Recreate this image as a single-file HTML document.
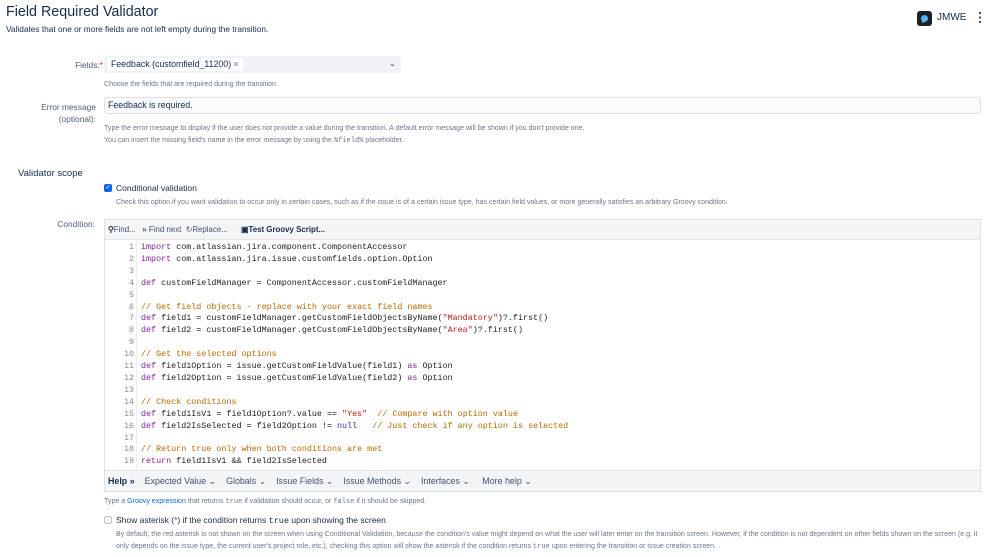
<!DOCTYPE html>
<html><head><meta charset="utf-8"><style>
*{margin:0;padding:0;box-sizing:border-box}
body{width:999px;height:557px;overflow:hidden;background:#fff;font-family:"Liberation Sans",sans-serif;color:#172b4d;position:relative}
.a{position:absolute;white-space:nowrap}
.lbl{font-size:8.4px;color:#505f79;text-align:right}
.hint{font-size:7.05px;color:#6b778c}
.mono{font-family:"Liberation Mono",monospace}
#code{position:absolute;left:104px;top:240px;width:877px;height:230px;font-family:"Liberation Mono",monospace;font-size:8.4px;line-height:11.9px;}
#code .g{position:absolute;left:0;top:2px;width:30px;text-align:right;color:#8a8a8a}
#code .c{position:absolute;left:37px;top:2px;color:#1e1e1e;white-space:pre}
.k{color:#8a1e9c}.s{color:#c41a16}.cm{color:#b86a00}.n{color:#2536c8}
.hb span{margin-right:10px}
</style></head><body>
<div class="a" style="left:6px;top:4px;font-size:14.3px;color:#172b4d">Field Required Validator</div>
<div class="a" style="left:6px;top:24px;font-size:8.3px;color:#172b4d">Validates that one or more fields are not left empty during the transition.</div>
<div class="a" style="left:917px;top:11px;width:15px;height:15px;background:#1d2125;border-radius:3px"><div style="position:absolute;left:4px;top:4px;width:7px;height:7px;background:#4fb3f0;border-radius:50% 50% 50% 10%;transform:rotate(-20deg)"></div></div>
<div class="a" style="left:937px;top:12px;font-size:10px;color:#172b4d">JMWE</div>
<div class="a" style="left:979px;top:12px;width:2px;height:11px;background:repeating-linear-gradient(#42526e 0 2px,transparent 2px 4.5px)"></div>

<div class="a lbl" style="right:896px;top:60px">Fields:<span style="color:#de350b">*</span></div>
<div class="a" style="left:104px;top:56px;width:297px;height:17px;background:#f1f2f5;border-radius:3px"></div>
<div class="a" style="left:107px;top:58px;height:13px;padding:0 4px;background:#fff;border-radius:2px;font-size:8.8px;line-height:13px;color:#172b4d">Feedback (customfield_11200) <span style="color:#6b778c">×</span></div>
<div class="a" style="left:389px;top:59px;font-size:8px;color:#42526e">⌄</div>
<div class="a hint" style="left:104px;top:81px">Choose the fields that are required during the transition.</div>

<div class="a lbl" style="right:903px;top:101px;line-height:12px">Error message<br>(optional):</div>
<div class="a" style="left:104px;top:97px;width:877px;height:17px;border:1px solid #dfe1e6;border-radius:3px;background:#fafbfc;font-size:8.8px;padding:2px 3px;color:#172b4d">Feedback is required.</div>
<div class="a hint" style="left:104px;top:125px">Type the error message to display if the user does not provide a value during the transition. A default error message will be shown if you don't provide one.</div>
<div class="a hint" style="left:104px;top:137px">You can insert the missing field's name in the error message by using the <span class="mono">%field%</span> placeholder.</div>

<div class="a" style="left:18px;top:168px;font-size:9.5px;color:#172b4d">Validator scope</div>
<div class="a" style="left:104px;top:184px;width:8px;height:8px;background:#0c66e4;border-radius:2px;color:#fff;font-size:6px;line-height:8px;text-align:center">✓</div>
<div class="a" style="left:116px;top:183px;font-size:8.5px;color:#172b4d">Conditional validation</div>
<div class="a hint" style="left:116px;top:199px">Check this option if you want validation to occur only in certain cases, such as if the issue is of a certain issue type, has certain field values, or more generally satisfies an arbitrary Groovy condition.</div>

<div class="a lbl" style="right:904px;top:219px">Condition:</div>
<div class="a" style="left:104px;top:219px;width:877px;height:273px;border:1px solid #dfe1e6"></div>
<div class="a" style="left:105px;top:220px;width:875px;height:20px;background:#f4f5f7;border-bottom:1px solid #e5e5e5"></div>
<div class="a" style="left:108px;top:225px;font-size:7.9px;color:#42526e"><b style="color:#172b4d">⚲</b>Find... &nbsp;&nbsp;<b>»</b> Find next &nbsp;↻Replace... &nbsp;&nbsp;&nbsp;&nbsp;&nbsp;<span style="color:#172b4d;font-weight:bold">▣Test Groovy Script...</span></div>
<div class="a" style="left:136px;top:240px;width:1px;height:230px;background:#eee"></div>
<div id="code">
<div class="g">1<br>2<br>3<br>4<br>5<br>6<br>7<br>8<br>9<br>10<br>11<br>12<br>13<br>14<br>15<br>16<br>17<br>18<br>19</div>
<div class="c"><span class="k">import</span> com.atlassian.jira.component.ComponentAccessor
<span class="k">import</span> com.atlassian.jira.issue.customfields.option.Option

<span class="k">def</span> customFieldManager = ComponentAccessor.customFieldManager

<span class="cm">// Get field objects - replace with your exact field names</span>
<span class="k">def</span> field1 = customFieldManager.getCustomFieldObjectsByName(<span class="s">"Mandatory"</span>)?.first()
<span class="k">def</span> field2 = customFieldManager.getCustomFieldObjectsByName(<span class="s">"Area"</span>)?.first()

<span class="cm">// Get the selected options</span>
<span class="k">def</span> field1Option = issue.getCustomFieldValue(field1) <span class="k">as</span> Option
<span class="k">def</span> field2Option = issue.getCustomFieldValue(field2) <span class="k">as</span> Option

<span class="cm">// Check conditions</span>
<span class="k">def</span> field1IsV1 = field1Option?.value == <span class="s">"Yes"</span>  <span class="cm">// Compare with option value</span>
<span class="k">def</span> field2IsSelected = field2Option != <span class="n">null</span>   <span class="cm">// Just check if any option is selected</span>

<span class="cm">// Return true only when both conditions are met</span>
<span class="k">return</span> field1IsV1 &amp;&amp; field2IsSelected</div>
</div>
<div class="a" style="left:105px;top:470px;width:875px;height:21px;background:#f4f5f7;border-top:1px solid #e5e5e5"></div>
<div class="a hb" style="left:108px;top:476px;font-size:8.9px;color:#42526e"><span style="color:#172b4d;font-weight:bold">Help »</span><span>Expected Value ⌄</span><span>Globals ⌄</span><span>Issue Fields ⌄</span><span>Issue Methods ⌄</span><span>Interfaces ⌄</span> <span>More help ⌄</span></div>

<div class="a hint" style="left:104px;top:498px">Type a <span style="color:#0c66e4">Groovy expression</span> that returns <span class="mono">true</span> if validation should occur, or <span class="mono">false</span> if it should be skipped.</div>
<div class="a" style="left:104px;top:516px;width:8px;height:8px;border:1px solid #c1c7d0;border-radius:2px"></div>
<div class="a" style="left:116px;top:515px;font-size:8.5px;color:#172b4d">Show asterisk (<span style="color:#de350b">*</span>) if the condition returns <span class="mono">true</span> upon showing the screen</div>
<div class="a hint" style="left:116px;top:531px">By default, the red asterisk is not shown on the screen when using Conditional Validation, because the condition's value might depend on what the user will later enter on the transition screen. However, if the condition is not dependent on other fields shown on the screen (e.g. it</div>
<div class="a hint" style="left:116px;top:543px">only depends on the issue type, the current user's project role, etc.), checking this option will show the asterisk if the condition returns <span class="mono">true</span> upon entering the transition or issue creation screen.</div>
</body></html>
